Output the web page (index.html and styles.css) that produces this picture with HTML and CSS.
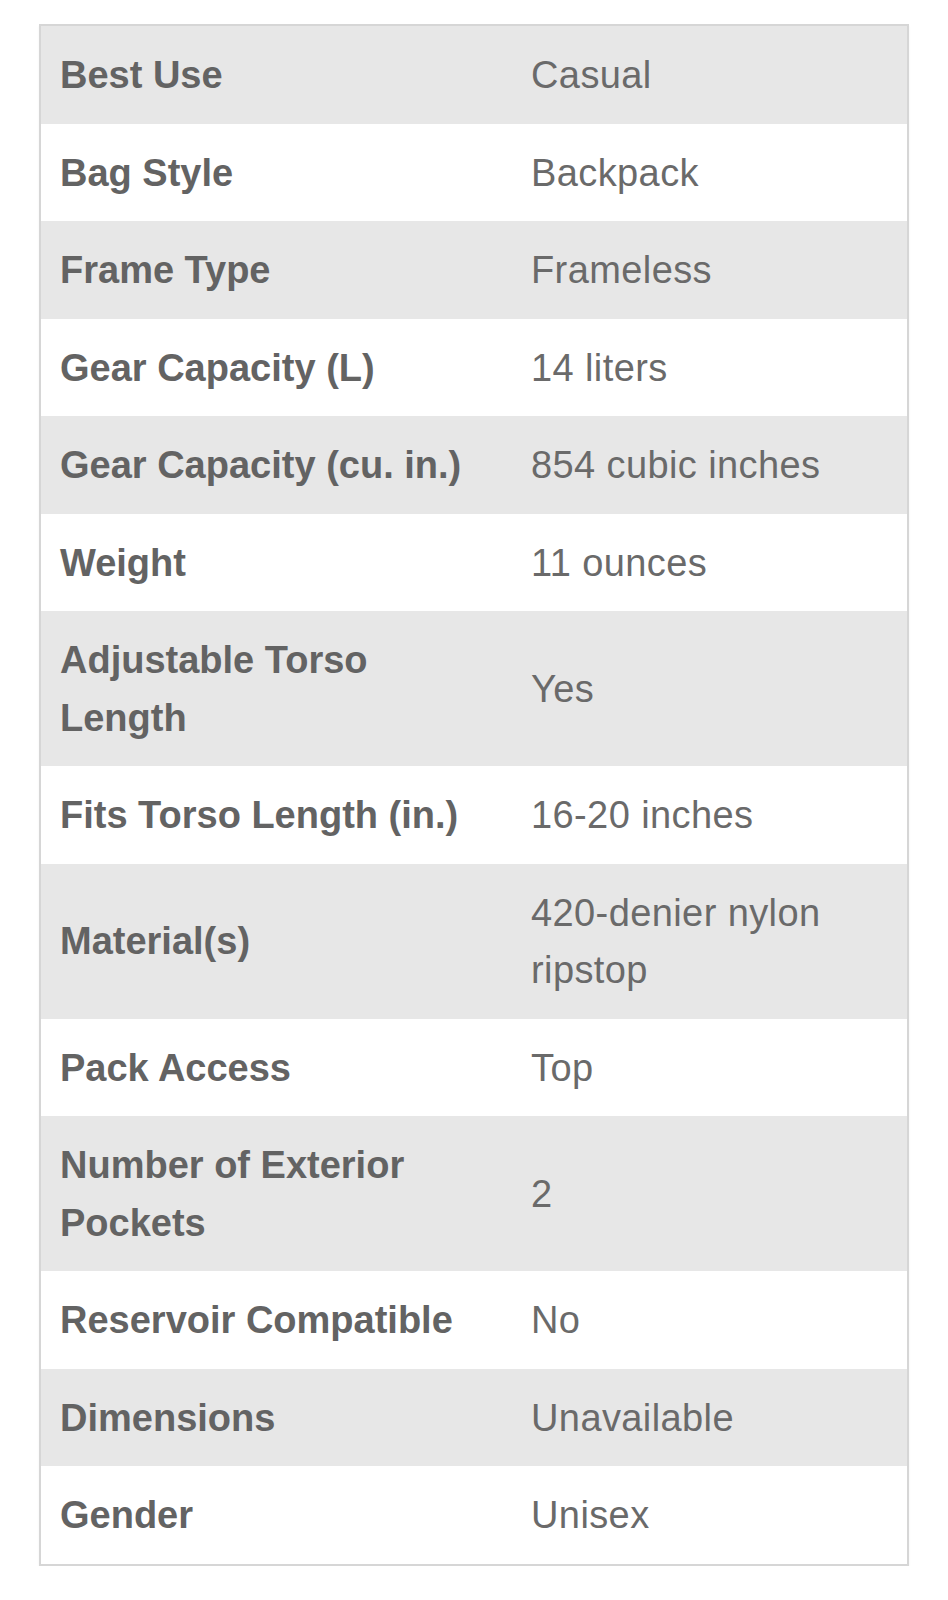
FILE: index.html
```html
<!DOCTYPE html>
<html>
<head>
<meta charset="utf-8">
<link rel="stylesheet" href="styles.css">
</head>
<body>
<div class="specs">
  <div class="row alt"><div class="label">Best Use</div><div class="value">Casual</div></div>
  <div class="row"><div class="label">Bag Style</div><div class="value">Backpack</div></div>
  <div class="row alt"><div class="label">Frame Type</div><div class="value">Frameless</div></div>
  <div class="row"><div class="label">Gear Capacity (L)</div><div class="value">14 liters</div></div>
  <div class="row alt"><div class="label">Gear Capacity (cu. in.)</div><div class="value">854 cubic inches</div></div>
  <div class="row"><div class="label">Weight</div><div class="value">11 ounces</div></div>
  <div class="row alt"><div class="label">Adjustable Torso Length</div><div class="value">Yes</div></div>
  <div class="row"><div class="label">Fits Torso Length (in.)</div><div class="value">16-20 inches</div></div>
  <div class="row alt"><div class="label">Material(s)</div><div class="value">420-denier nylon ripstop</div></div>
  <div class="row"><div class="label">Pack Access</div><div class="value">Top</div></div>
  <div class="row alt"><div class="label">Number of Exterior Pockets</div><div class="value">2</div></div>
  <div class="row"><div class="label">Reservoir Compatible</div><div class="value">No</div></div>
  <div class="row alt"><div class="label">Dimensions</div><div class="value">Unavailable</div></div>
  <div class="row"><div class="label">Gender</div><div class="value">Unisex</div></div>
</div>
</body>
</html>
```
FILE: styles.css
```css
html, body {
  margin: 0;
  padding: 0;
  background: #ffffff;
}
body {
  font-family: "Liberation Sans", Arial, Helvetica, sans-serif;
  color: #636363;
}
.specs {
  margin: 24px 0 0 39px;
  width: 866px;
  border: 2px solid #d6d6d6;
  box-shadow: 0 2px 2px rgba(0,0,0,0.06);
}
.row {
  display: grid;
  grid-template-columns: 471px 1fr;
  background: #ffffff;
}
.row.alt {
  background: #e7e7e7;
}
.label, .value {
  display: flex;
  align-items: center;
  padding: 21px 18px 19px 19px;
  font-size: 38px;
  line-height: 57.5px;
}
.label {
  font-weight: bold;
  padding-right: 30px;
}
.value {
  font-weight: normal;
  color: #6a6a6a;
  letter-spacing: 0.4px;
}
```
